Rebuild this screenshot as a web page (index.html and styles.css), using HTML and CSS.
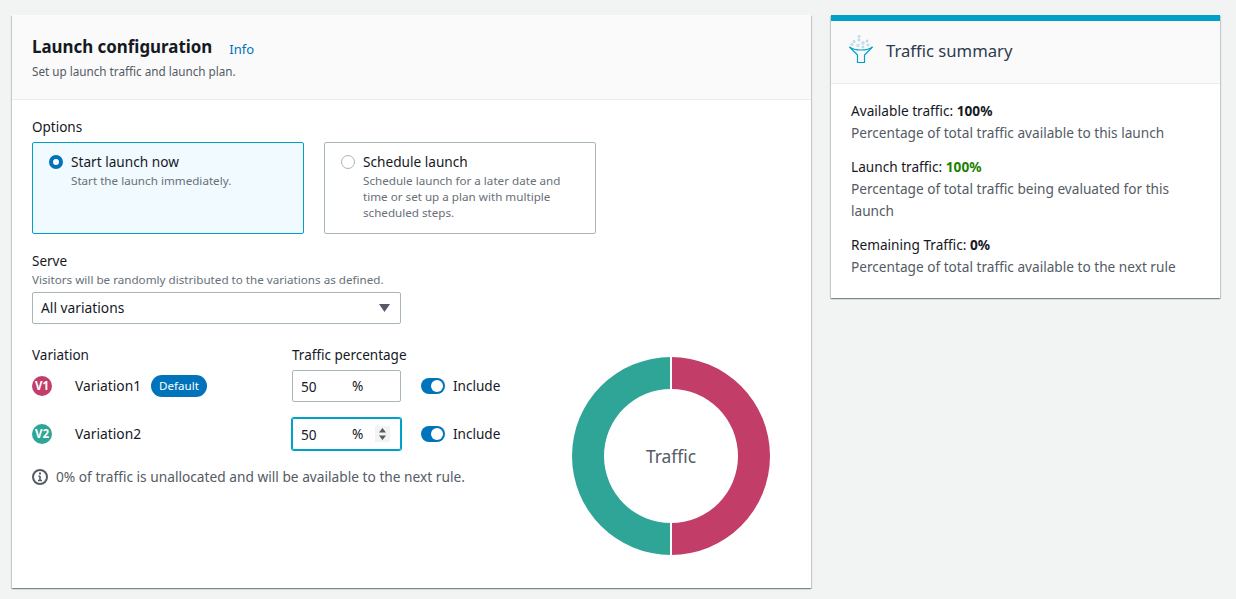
FILE: index.html
```html
<!DOCTYPE html>
<html lang="en">
  <head>
    <meta charset="utf-8" />
    <meta name="viewport" content="width=device-width, initial-scale=1.0" />
    <title>Launch configuration</title>
    <link rel="stylesheet" href="styles.css">
  </head>
  <body>
    <div class="page">
      <section class="card config">
        <header class="config-head">
          <div class="title-row">
            <h1>Launch configuration</h1>
            <a class="info" href="#">Info</a>
          </div>
          <p class="hint">Set up launch traffic and launch plan.</p>
        </header>

        <div class="config-body">
          <div class="field-label">Options</div>
          <div class="tiles">
            <div class="tile selected">
              <span class="radio on"></span>
              <div>
                <div class="tile-title">Start launch now</div>
                <div class="tile-text">Start the launch immediately.</div>
              </div>
            </div>
            <div class="tile">
              <span class="radio"></span>
              <div>
                <div class="tile-title">Schedule launch</div>
                <div class="tile-text">Schedule launch for a later date and time or set up a plan with multiple scheduled steps.</div>
              </div>
            </div>
          </div>

          <div class="serve">
            <div class="field-label">Serve</div>
            <div class="serve-hint">Visitors will be randomly distributed to the variations as defined.</div>
            <div class="select">
              <span>All variations</span>
              <svg width="11" height="8" viewBox="0 0 11 8"><path d="M0 0h11L5.500 8z" fill="#545b64" /></svg>
            </div>
          </div>

          <div class="split">
            <div class="table">
              <div class="row heads">
                <div class="col-name field-label">Variation</div>
                <div class="field-label">Traffic percentage</div>
              </div>
              <div class="row">
                <div class="col-name">
                  <span class="dot v1">V1</span>
                  <span class="var-name">Variation1</span>
                  <span class="badge">Default</span>
                </div>
                <div class="num"><span class="num-val">50</span><span>%</span></div>
                <span class="toggle"></span>
                <span class="include">Include</span>
              </div>
              <div class="row">
                <div class="col-name">
                  <span class="dot v2">V2</span>
                  <span class="var-name">Variation2</span>
                </div>
                <div class="num focus">
                  <span class="num-val">50</span><span>%</span>
                  <span class="spin">
                    <svg width="9" height="14" viewBox="0 0 9 14"><path d="M4.500 1 8 5.500H1zM4.500 13 1 8.500h7z" fill="#545b64" /></svg>
                  </span>
                </div>
                <span class="toggle"></span>
                <span class="include">Include</span>
              </div>
              <div class="note">
                <svg width="16" height="16" viewBox="0 0 16 16">
                  <circle cx="8" cy="8" r="7" fill="none" stroke="#545b64" stroke-width="2" />
                  <path d="M8 7v4.500M6 11.500h4M6.500 7.200H8" fill="none" stroke="#545b64" stroke-width="1.600" />
                  <rect x="7" y="3.500" width="2" height="2" fill="#545b64" />
                </svg>
                <span>0% of traffic is unallocated and will be available to the next rule.</span>
              </div>
            </div>

            <div class="donut">
              <svg width="200" height="200" viewBox="0 0 200 200">
                <path d="M100 1a99 99 0 0 1 0 198v-32a67 67 0 0 0 0-134z" fill="#c33d69" />
                <path d="M100 1a99 99 0 0 0 0 198v-32a67 67 0 0 1 0-134z" fill="#2ea597" />
                <path d="M100 0v34M100 166v34" stroke="#fff" stroke-width="2" />
              </svg>
              <span class="donut-label">Traffic</span>
            </div>
          </div>
        </div>
      </section>

      <aside class="card summary">
        <header class="summary-head">
          <svg class="funnel" width="24" height="28" viewBox="0 0 24 28" fill="none">
            <path d="M0.500 12 8.500 20v7.500h7V20l8-8" stroke="#00a1c9" stroke-width="1.200" stroke-linejoin="round" />
            <path d="M0.500 12c5 4 18 4 23 0" stroke="#00a1c9" stroke-width="1.200" />
            <g stroke="#a9d3e6" stroke-width="1">
              <circle cx="10" cy="1.500" r="1" />
              <circle cx="5" cy="6.500" r="1" />
              <circle cx="10" cy="5" r="1" />
              <circle cx="14" cy="8" r="1.200" />
              <circle cx="3" cy="9.500" r="1" />
              <circle cx="9" cy="10.500" r="1.200" />
              <circle cx="18" cy="6" r="1" />
              <circle cx="19" cy="10" r="1" />
              <circle cx="14" cy="12" r="1" />
            </g>
          </svg>
          <h2>Traffic summary</h2>
        </header>
        <div class="summary-body">
          <div class="stat">
            <div class="stat-name">Available traffic: <b>100%</b></div>
            <div class="stat-text">Percentage of total traffic available to this launch</div>
          </div>
          <div class="stat">
            <div class="stat-name">Launch traffic: <b class="green">100%</b></div>
            <div class="stat-text">Percentage of total traffic being evaluated for this launch</div>
          </div>
          <div class="stat">
            <div class="stat-name">Remaining Traffic: <b>0%</b></div>
            <div class="stat-text">Percentage of total traffic available to the next rule</div>
          </div>
        </div>
      </aside>
    </div>
  </body>
</html>
```

FILE: styles.css
```css
* {
  box-sizing: border-box;
}

body {
  margin: 0;
  background: #f2f3f3;
  color: #16191f;
  font-family: "Noto Sans", sans-serif;
  font-size: 13.65px;
  line-height: 22px;
}

.page {
  display: flex;
  align-items: flex-start;
  gap: 20px;
  padding: 15px 16px 11px 12px;
}

.card {
  background: #fff;
  box-shadow: 0 1px 1px 0 rgba(0, 28, 36, 0.3), 1px 1px 1px 0 rgba(0, 28, 36, 0.15), -1px 1px 1px 0 rgba(0, 28, 36, 0.15);
}

.config {
  width: 799px;
  height: 573px;
}

.config-head {
  height: 85px;
  padding: 19px 20px 0;
  background: #fafafa;
  border-bottom: 1px solid #eaeded;
}

.title-row {
  display: flex;
  align-items: center;
  gap: 17px;
  height: 26px;
}

h1 {
  margin: 0;
  font-size: 16.9px;
  line-height: 26px;
  font-weight: 700;
}

.info {
  color: #0073bb;
  text-decoration: none;
  font-size: 13px;
  margin-top: 3px;
}

.hint {
  margin: 2px 0 0;
  font-size: 11.7px;
  line-height: 18px;
  color: #545b64;
}

.config-body {
  padding: 16px 20px 0;
}

.field-label {
  font-size: 13.5px;
  line-height: 22px;
}

.tiles {
  display: flex;
  gap: 20px;
  margin-top: 4px;
}

.tile {
  display: flex;
  gap: 8px;
  width: 272px;
  height: 92px;
  padding: 8px 16px;
  border: 1px solid #aab7b8;
  border-radius: 2px;
}

.tile.selected {
  background: #f1faff;
  border-color: #00a1c9;
}

.radio {
  flex: none;
  width: 14px;
  height: 14px;
  margin-top: 4px;
  border: 1px solid #aab7b8;
  border-radius: 50%;
  background: #fff;
}

.radio.on {
  border: 4px solid #0073bb;
}

.tile-title {
  line-height: 21px;
}

.tile-text {
  margin-top: 1px;
  font-size: 11.65px;
  line-height: 16px;
  color: #687078;
}

.serve {
  margin-top: 16px;
}

.serve-hint {
  font-size: 11.65px;
  line-height: 16px;
  color: #687078;
}

.select {
  display: flex;
  align-items: center;
  justify-content: space-between;
  width: 369px;
  height: 32px;
  margin-top: 4px;
  padding: 0 10px 0 8px;
  border: 1px solid #aab7b8;
  border-radius: 2px;
  font-size: 13.8px;
}

.split {
  display: flex;
  margin-top: 20px;
}

.table {
  width: 539px;
}

.row {
  display: flex;
  align-items: center;
  height: 32px;
  margin-top: 16px;
}

.row.heads {
  height: 22px;
  margin-top: 0;
  margin-bottom: -12px;
}

.col-name {
  display: flex;
  align-items: center;
  width: 260px;
}

.dot {
  display: flex;
  align-items: center;
  justify-content: center;
  flex: none;
  width: 20px;
  height: 20px;
  margin-right: 23px;
  border-radius: 50%;
  color: #fff;
  font-size: 11.5px;
  font-weight: 700;
}

.dot.v1 {
  background: #c33d69;
}

.dot.v2 {
  background: #2ea597;
}

.var-name {
  font-size: 13.8px;
}

.badge {
  margin-left: 10px;
  padding: 0 8px;
  height: 22px;
  border-radius: 11px;
  background: #0073bb;
  color: #fff;
  font-size: 11.6px;
  line-height: 22px;
}

.num {
  display: flex;
  align-items: center;
  width: 109px;
  height: 32px;
  padding: 0 8px;
  border: 1px solid #aab7b8;
  border-radius: 2px;
  margin-right: 20px;
}

.num.focus {
  border-color: #00a1c9;
  box-shadow: 0 0 0 1px #00a1c9;
}

.num-val {
  width: 51px;
  padding-top: 2px;
}

.spin {
  display: flex;
  align-items: center;
  justify-content: center;
  width: 15px;
  height: 16px;
  margin-left: 12px;
  background: #f2f3f3;
}

.toggle {
  position: relative;
  width: 24px;
  height: 16px;
  border-radius: 8px;
  background: #0073bb;
  margin-right: 8px;
}

.toggle::after {
  content: "";
  position: absolute;
  top: 2px;
  right: 2px;
  width: 12px;
  height: 12px;
  border-radius: 50%;
  background: #fff;
}

.include {
  font-size: 13.55px;
}

.note {
  display: flex;
  align-items: center;
  gap: 8px;
  margin-top: 16px;
  font-size: 13.72px;
  color: #545b64;
}

.donut {
  position: relative;
  width: 200px;
  height: 200px;
  margin-top: 12px;
}

.donut svg {
  display: block;
}

.donut-label {
  position: absolute;
  top: 0;
  left: 0;
  width: 100%;
  line-height: 200px;
  text-align: center;
  font-size: 17.4px;
  color: #545b64;
}

.summary {
  width: 389px;
  border-top: 6px solid #00a1c9;
}

.summary-head {
  display: flex;
  align-items: center;
  gap: 13px;
  height: 63px;
  padding: 0 18px 2px;
  background: #fafafa;
  border-bottom: 1px solid #eaeded;
}

.funnel {
  margin-bottom: 4px;
}

h2 {
  margin: 0;
  font-size: 16.65px;
  font-weight: 400;
  color: #2f3a4d;
}

.summary-body {
  padding: 16px 20px 8px;
}

.stat {
  margin-bottom: 12px;
}

.stat-text {
  color: #545b64;
}

.green {
  color: #1d8102;
}
```
